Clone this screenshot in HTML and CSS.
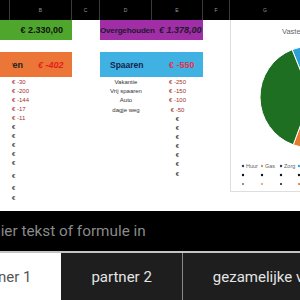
FILE: index.html
```html
<!DOCTYPE html>
<html>
<head>
<meta charset="utf-8">
<link rel="stylesheet" href="styles.css">
</head>
<body>
<div class="sheet">
  <div class="colhead">
    <div class="ch ch-a"></div>
    <div class="ch ch-b">B</div>
    <div class="ch ch-c">C</div>
    <div class="ch ch-d">D</div>
    <div class="ch ch-e">E</div>
    <div class="ch ch-f">F</div>
    <div class="ch ch-g">G</div>
  </div>
  <div class="body">
    <div class="cells">
      <div class="box green"><span class="amount">€ 2.330,00</span></div>
      <div class="box purple">
        <span class="plabel">Overgehouden</span>
        <span class="pvalue">€ 1.378,00</span>
      </div>
      <div class="box orange">
        <span class="olabel"><span>Uitgaven</span></span>
        <span class="ovalue">€ -402</span>
      </div>
      <div class="box blue">
        <span class="blabel">Spaaren</span>
        <span class="bvalue">€ -550</span>
      </div>
      <div class="list list-b">
        <div class="li h85 neg">€ -30</div>
        <div class="li h9 neg">€ -200</div>
        <div class="li h9 neg">€ -144</div>
        <div class="li h9 neg">€ -17</div>
        <div class="li h9 neg">€ -11</div>
        <div class="li h9">€</div>
        <div class="li h9">€</div>
        <div class="li h9">€</div>
        <div class="li h9">€</div>
        <div class="li h9">€</div>
        <div class="li h13">€</div>
        <div class="li h12">€</div>
        <div class="li h10">€</div>
      </div>
      <div class="list list-d">
        <div class="li h85">Vakantie</div>
        <div class="li h9">Vrij spaaren</div>
        <div class="li h9">Auto</div>
        <div class="li h10">dagje weg</div>
      </div>
      <div class="list list-e">
        <div class="li h85 neg">€ -250</div>
        <div class="li h9 neg">€ -150</div>
        <div class="li h9 neg">€ -100</div>
        <div class="li h10 neg">€ -50</div>
        <div class="li h9">€</div>
        <div class="li h9">€</div>
        <div class="li h9">€</div>
        <div class="li h9">€</div>
        <div class="li h9">€</div>
        <div class="li h9">€</div>
        <div class="li h10">€</div>
      </div>
    </div>
    <div class="chart">
      <svg class="chart-svg" width="80" height="171" viewBox="0 0 80 171">
        <text x="51" y="14" class="ctitle">Vaste lasten</text>
        <path d="M80 77 L80 26 A51 51 0 0 1 124.2 102.5 Z" fill="#8a8a8a" stroke="#fff" stroke-width="1"/>
        <path d="M80 77 L61.06 29.65 A51 51 0 0 1 124.2 51.5 Z" fill="#2d9fd9" stroke="#fff" stroke-width="1"/>
        <path d="M80 77 L124.2 102.5 A51 51 0 0 1 62.22 124.8 Z" fill="#e67a2e" stroke="#fff" stroke-width="1"/>
        <path d="M80 77 L62.22 124.8 A51 51 0 0 1 61.06 29.65 Z" fill="#1f6f22" stroke="#fff" stroke-width="1"/>
        <circle cx="12" cy="146" r="1.2" fill="#1f3f6a"/>
        <text x="15" y="148" class="leg">Huur</text>
        <circle cx="31" cy="146" r="1.2" fill="#d9955a"/>
        <text x="34" y="148" class="leg">Gas</text>
        <circle cx="50" cy="146" r="1.2" fill="#1f3f6a"/>
        <text x="53" y="148" class="leg">Zorg</text>
        <circle cx="68" cy="146" r="1.2" fill="#2d9fd9"/>
        <circle cx="12" cy="155" r="1.2" fill="#111"/>
        <circle cx="31" cy="155" r="1.2" fill="#111"/>
        <circle cx="50" cy="155" r="1.2" fill="#111"/>
        <circle cx="68" cy="155" r="1.2" fill="#111"/>
        <circle cx="12" cy="164" r="1.1" fill="#777"/>
        <circle cx="31" cy="164" r="1.1" fill="#d9a070"/>
        <circle cx="50" cy="164" r="1.1" fill="#222"/>
        <circle cx="68" cy="164" r="1.1" fill="#e67a2e"/>
      </svg>
    </div>
  </div>
  <div class="formula"><span class="ftext">Voer hier tekst of formule in</span></div>
  <div class="tabs">
    <div class="tab active">partner 1</div>
    <div class="tab">partner 2</div>
    <div class="tab">gezamelijke vaste lasten</div>
  </div>
</div>
</body>
</html>
```
FILE: styles.css
```css
html, body {
  margin: 0;
  padding: 0;
  width: 300px;
  height: 300px;
  overflow: hidden;
  background: #fff;
}
.sheet {
  width: 300px;
  height: 300px;
  overflow: hidden;
  font-family: "Liberation Sans", Arial, sans-serif;
}
.colhead {
  display: grid;
  grid-template-columns: 10px 62px 28px 52px 51px 27px 70px;
  height: 20px;
  background: #000;
}
.ch {
  display: flex;
  align-items: center;
  justify-content: center;
  font-size: 5px;
  color: #9a9a9a;
  border-right: 1px solid #3a3a3a;
}
.ch-g { border-right: none; }
.body {
  display: flex;
  height: 191px;
  width: 310px;
}
.cells {
  width: 230px;
  flex: none;
  display: grid;
  grid-template-columns: 10px 62px 28px 52px 51px 27px;
  grid-template-rows: 20px 12px 25px 1fr;
  font-family: "Liberation Sans", sans-serif;
}
.box {
  display: flex;
  align-items: center;
  font-weight: bold;
  font-size: 9px;
  white-space: nowrap;
  overflow: hidden;
}
.green {
  grid-column: 1 / 3;
  grid-row: 1;
  background: #4ea62c;
  color: #111;
  justify-content: flex-end;
  padding-right: 9px;
}
.purple {
  grid-column: 4 / 6;
  grid-row: 1;
  background: #a12ea6;
  color: #1a1a2a;
}
.plabel {
  width: 58px;
  flex: none;
  font-size: 8px;
  letter-spacing: -0.15px;
}
.pvalue {
  margin-left: 1px;
  font-style: italic;
}
.orange {
  grid-column: 1 / 3;
  grid-row: 3;
  background: #ec7638;
}
.olabel {
  margin-left: 12px;
  width: 11px;
  flex: none;
  display: flex;
  justify-content: flex-end;
  overflow: hidden;
  color: #222;
}
.ovalue {
  margin-left: 15px;
  color: #e3201b;
  font-style: italic;
}
.blue {
  grid-column: 4 / 6;
  grid-row: 3;
  background: #3fb1e3;
}
.blabel {
  margin-left: 10px;
  width: 59px;
  flex: none;
  color: #14244a;
  font-size: 8.5px;
}
.bvalue {
  color: #e0344e;
}
.list {
  grid-row: 4;
  display: flex;
  flex-direction: column;
  font-size: 6px;
  color: #222;
}
.list-b { grid-column: 2; padding-left: 2px; }
.list-d { grid-column: 4; align-items: center; color: #333; }
.list-e { grid-column: 5; align-items: center; }
.li {
  display: flex;
  align-items: flex-end;
  line-height: 7px;
  white-space: nowrap;
  flex: none;
}
.neg { color: #a4302b; }
.h85 { height: 8.5px; }
.h9 { height: 9px; }
.h10 { height: 10px; }
.h12 { height: 12px; }
.h13 { height: 13px; }
.chart {
  width: 80px;
  height: 171px;
  flex: none;
  border-left: 1px solid #dedede;
  border-bottom: 1px solid #dedede;
}
.chart-svg { display: block; }
.ctitle {
  font-family: "Liberation Sans", sans-serif;
  font-size: 7.5px;
  fill: #666;
}
.leg {
  font-family: "Liberation Sans", sans-serif;
  font-size: 5.5px;
  fill: #666;
}
.formula {
  height: 40px;
  background: #000;
  display: flex;
  align-items: center;
  overflow: hidden;
}
.ftext {
  margin-left: -43px;
  font-family: Roboto, sans-serif;
  font-size: 15.3px;
  color: #8a8a8a;
  white-space: nowrap;
}
.tabs {
  display: flex;
  height: 48px;
  border-top: 2px solid #c4c4c4;
  background: #1e1e1e;
}
.tab {
  flex: none;
  display: flex;
  align-items: center;
  padding: 0 30px;
  font-family: Roboto, sans-serif;
  font-size: 15px;
  color: #e4e4e4;
  background: #1e1e1e;
  white-space: nowrap;
  border-right: 1px solid #8a8a8a;
}
.tab.active {
  margin-left: -59px;
  background: #fff;
  color: #555;
  border-right: none;
}
```
